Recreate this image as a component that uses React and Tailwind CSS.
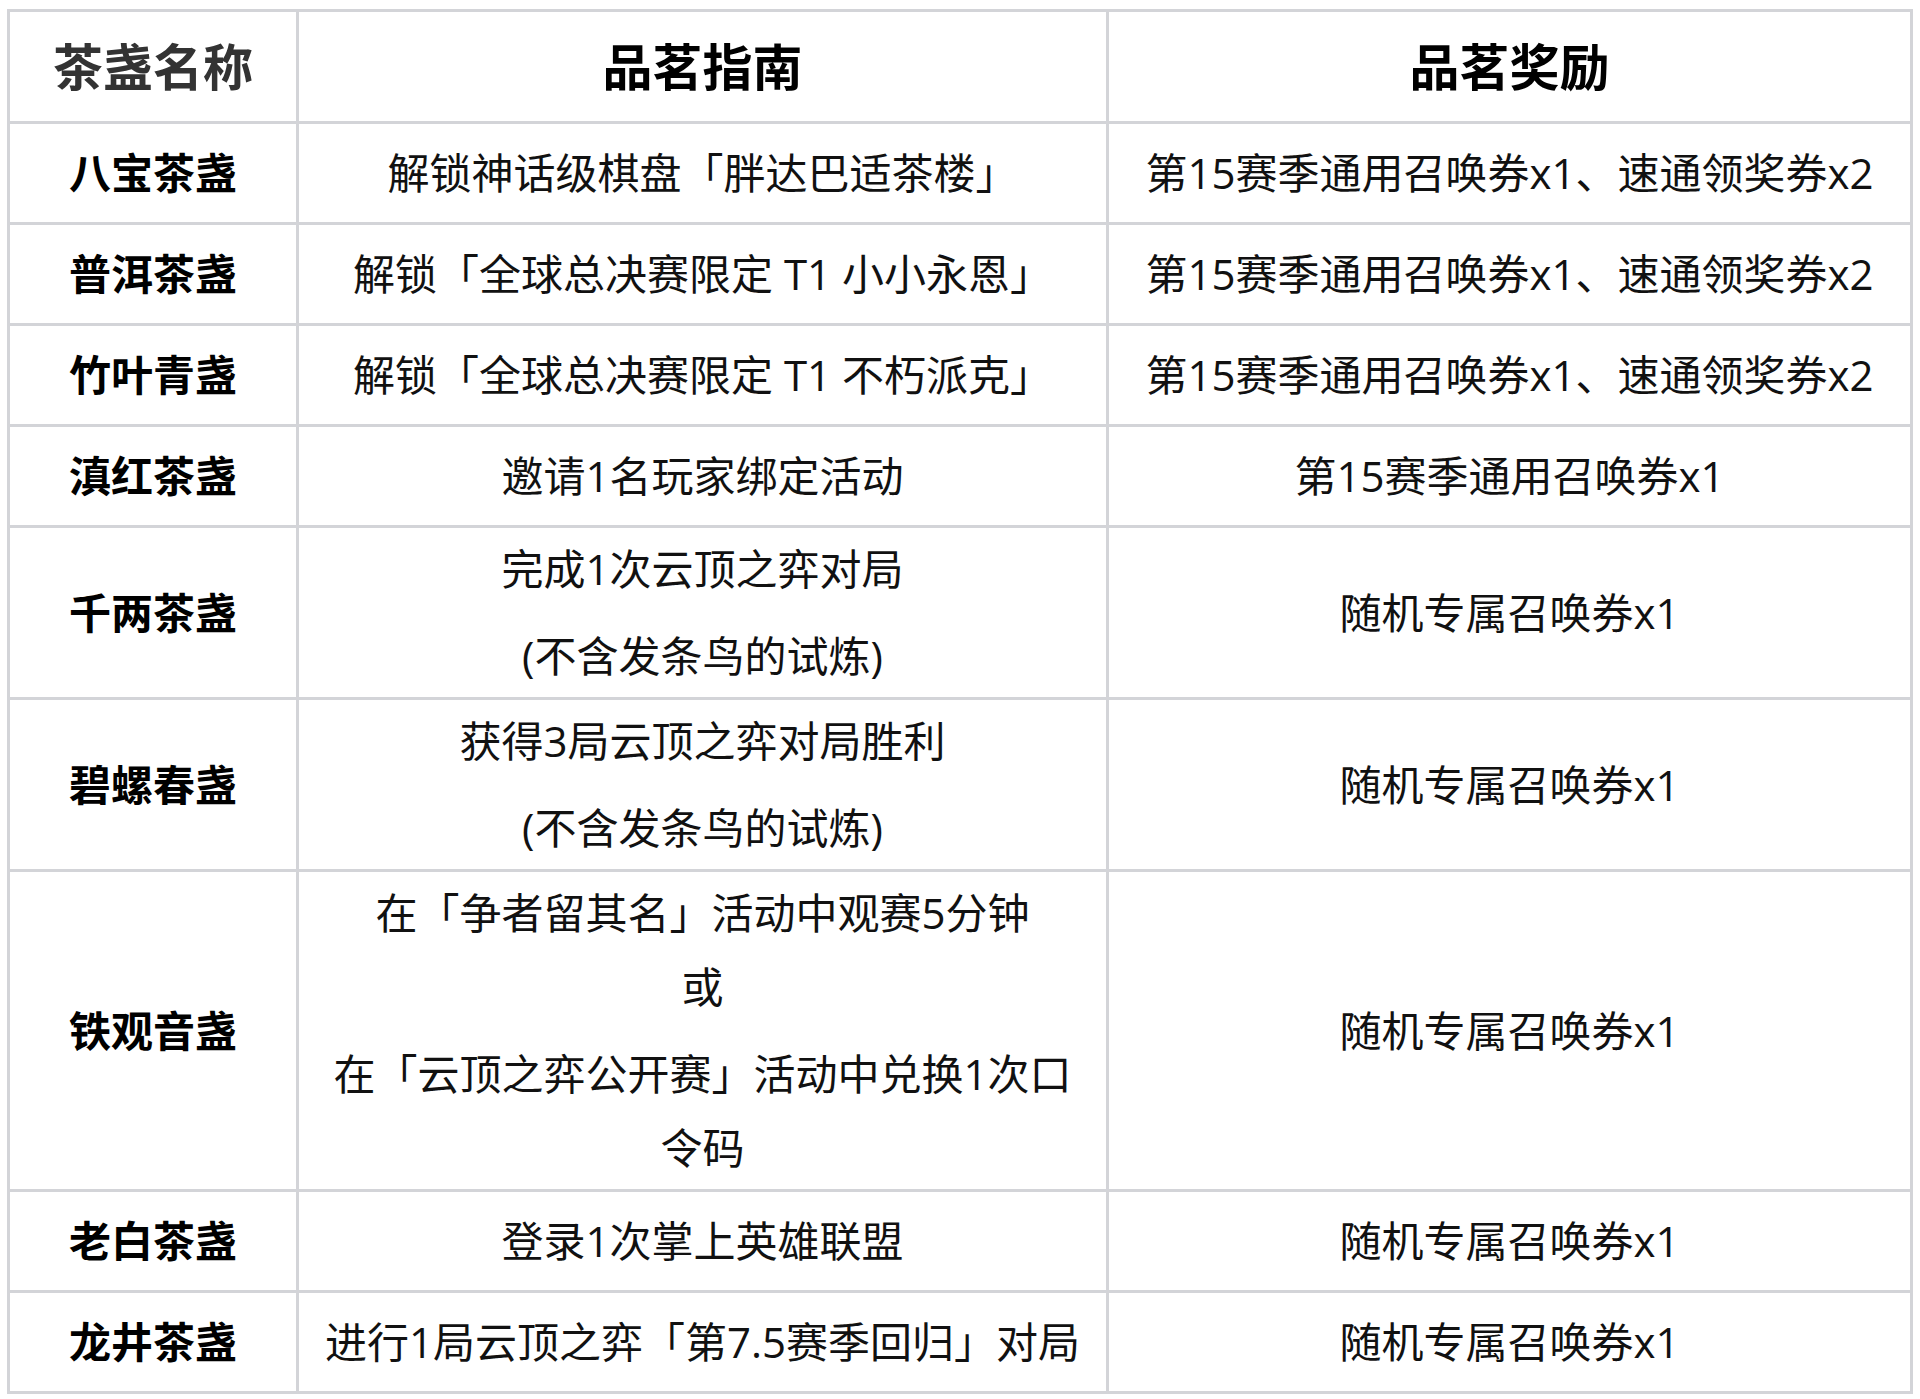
import React from 'react';

const rows = [
  { name: '八宝茶盏', guide: [['解锁神话级棋盘「胖达巴适茶楼」']], reward: '第15赛季通用召唤券x1、速通领奖券x2' },
  { name: '普洱茶盏', guide: [['解锁「全球总决赛限定 T1 小小永恩」']], reward: '第15赛季通用召唤券x1、速通领奖券x2' },
  { name: '竹叶青盏', guide: [['解锁「全球总决赛限定 T1 不朽派克」']], reward: '第15赛季通用召唤券x1、速通领奖券x2' },
  { name: '滇红茶盏', guide: [['邀请1名玩家绑定活动']], reward: '第15赛季通用召唤券x1' },
  { name: '千两茶盏', guide: [['完成1次云顶之弈对局'], ['(不含发条鸟的试炼)']], reward: '随机专属召唤券x1' },
  { name: '碧螺春盏', guide: [['获得3局云顶之弈对局胜利'], ['(不含发条鸟的试炼)']], reward: '随机专属召唤券x1' },
  {
    name: '铁观音盏',
    guide: [
      ['在「争者留其名」活动中观赛5分钟', '或'],
      ['在「云顶之弈公开赛」活动中兑换1次口', '令码'],
    ],
    reward: '随机专属召唤券x1',
  },
  { name: '老白茶盏', guide: [['登录1次掌上英雄联盟']], reward: '随机专属召唤券x1' },
  { name: '龙井茶盏', guide: [['进行1局云顶之弈「第7.5赛季回归」对局']], reward: '随机专属召唤券x1' },
];

const font = { fontFamily: '"Open Sans", "Noto Sans CJK SC", sans-serif' };

// each cell is a white box; the grid gap shows the grey borders
const cell = 'bg-white flex flex-col items-center justify-center text-center px-5 py-1 min-h-[98px]';

export default function App() {
  return (
    <div className="min-h-screen bg-white pt-[9px] pl-[7px]" style={font}>
      <div className="w-[1906px] grid grid-cols-[286px_807px_801px] gap-[3px] p-[3px] bg-[#d3d4d8]">
        {/* header */}
        <div className={`${cell} min-h-[109px]`}>
          <span className="text-[50px] leading-[74px] font-bold text-[#333]">茶盏名称</span>
        </div>
        <div className={`${cell} min-h-[109px]`}>
          <span className="text-[50px] leading-[74px] font-bold text-black">品茗指南</span>
        </div>
        <div className={`${cell} min-h-[109px]`}>
          <span className="text-[50px] leading-[74px] font-bold text-black">品茗奖励</span>
        </div>

        {rows.map((row) => (
          <React.Fragment key={row.name}>
            <div className={cell}>
              <span className="text-[42px] leading-[74px] font-bold text-black">{row.name}</span>
            </div>
            <div className={`${cell} gap-[13px]`}>
              {row.guide.map((para, i) => (
                <p key={i} className="text-[42px] leading-[74px] text-[#111]">
                  {para.map((line, j) => (
                    <React.Fragment key={j}>
                      {j > 0 && <br />}
                      {line}
                    </React.Fragment>
                  ))}
                </p>
              ))}
            </div>
            <div className={cell}>
              <span className="text-[42px] leading-[74px] text-[#111]">{row.reward}</span>
            </div>
          </React.Fragment>
        ))}
      </div>
    </div>
  );
}
